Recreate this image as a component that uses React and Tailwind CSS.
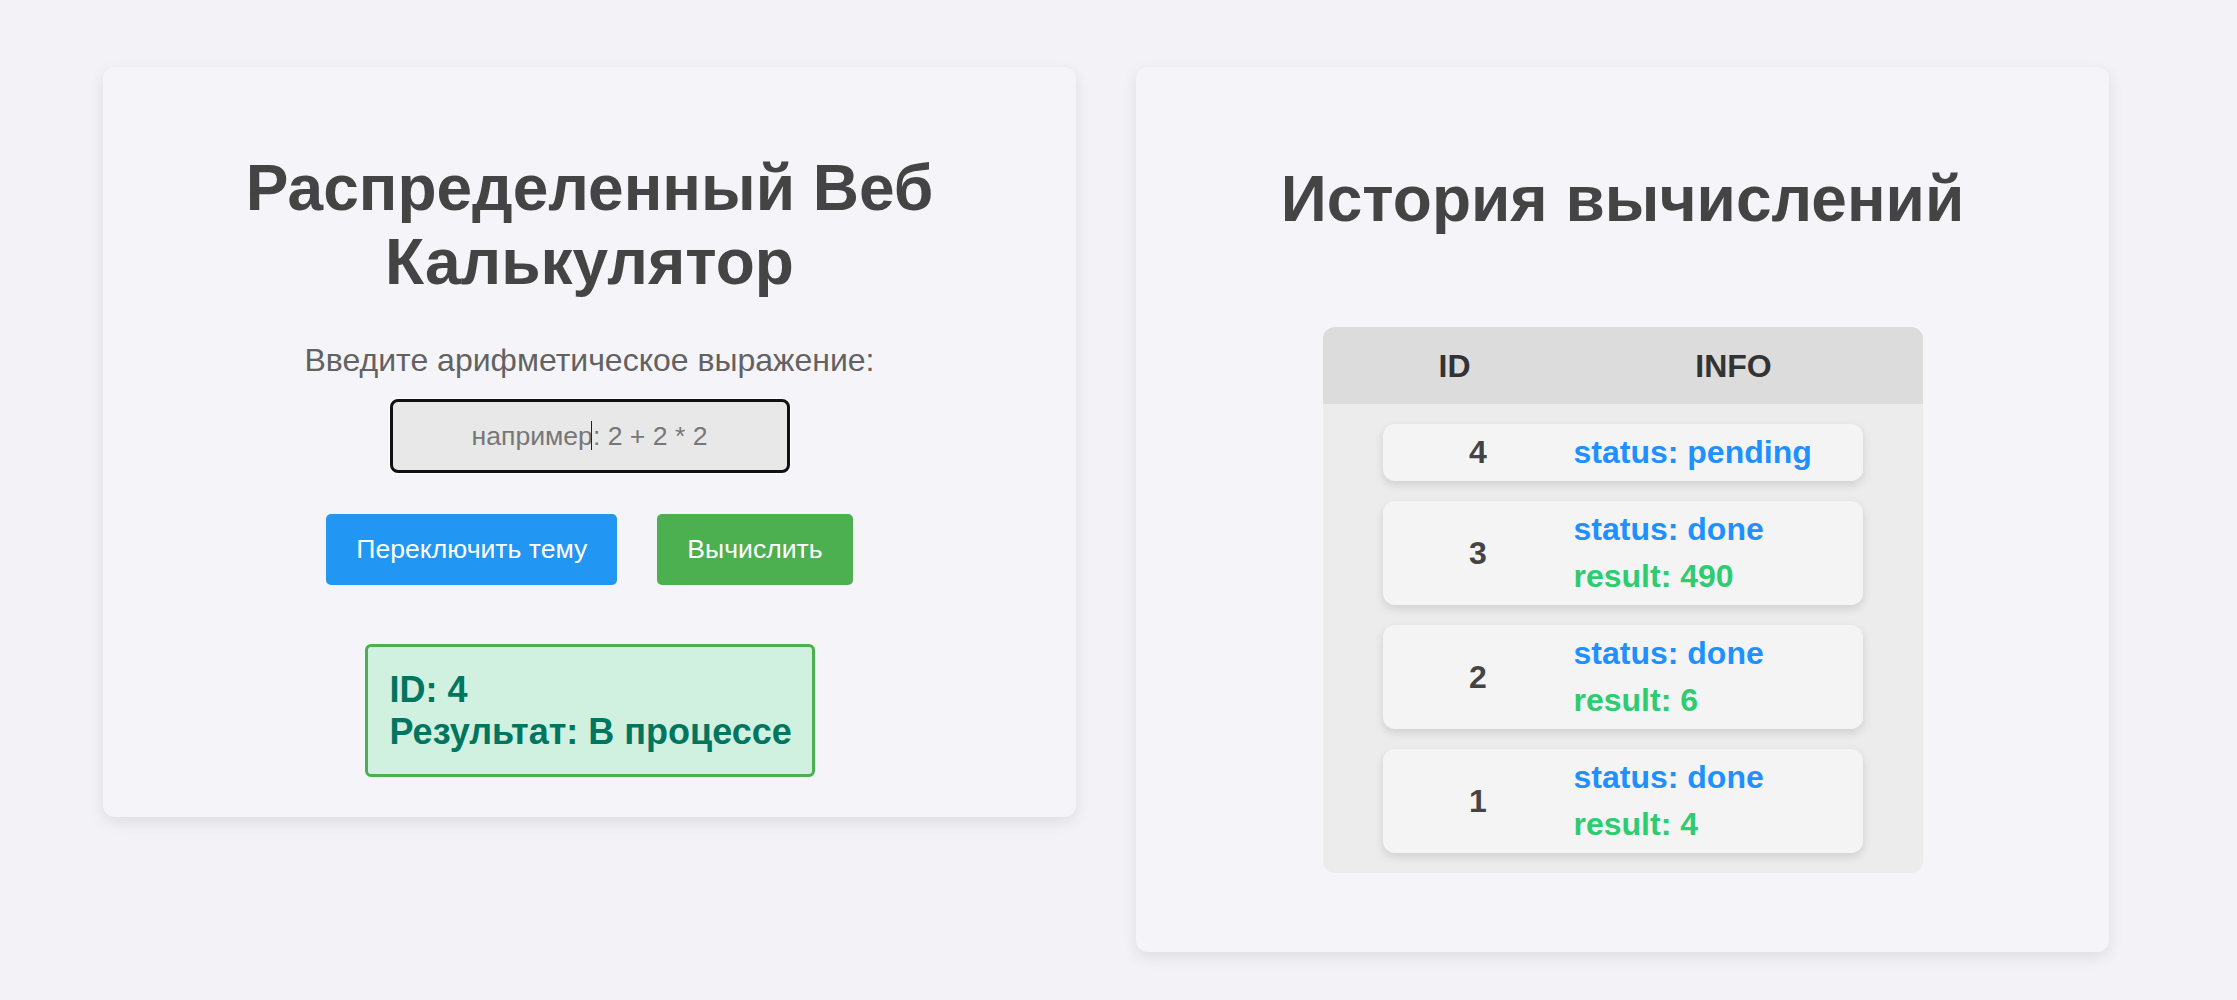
import React from 'react'

const history = [
  { id: 4, status: 'pending' },
  { id: 3, status: 'done', result: 490 },
  { id: 2, status: 'done', result: 6 },
  { id: 1, status: 'done', result: 4 },
]

const App = () => {
  return (
    <div className="min-h-screen bg-[#f3f3f7] font-['Liberation_Sans',Arial,sans-serif]">
      <div className="flex items-start gap-[60px] pl-[103px] pt-[67px]">
        {/* calculator */}
        <div className="flex w-[973px] flex-col items-center rounded-xl bg-[#f5f5f9] pt-[84px] pb-[40px] shadow-[0_5px_16px_rgba(0,0,0,0.09)]">
          <h1 className="text-center text-[64px] leading-[normal] font-bold text-[#444]">
            Распределенный Веб
            <br />
            Калькулятор
          </h1>
          <p className="mt-[43px] text-[32px] leading-[normal] text-[#626262]">
            Введите арифметическое выражение:
          </p>
          <div className="relative mt-[20px]">
            <input
              className="h-[74px] w-[400px] rounded-lg border-[3px] border-[#111] bg-[#e8e8e8] text-center text-[26.6px] outline-none ring-1 ring-white placeholder:text-[#777]"
              type="text"
              placeholder="например: 2 + 2 * 2"
            />
            <span className="pointer-events-none absolute top-[22px] left-[201px] h-[29px] w-px bg-[#222]" />
          </div>
          <div className="mt-[41px] flex gap-[40px]">
            <button className="rounded-[5px] bg-[#2196f3] px-[30px] py-[20px] text-[26.6px] leading-[normal] text-white">
              Переключить тему
            </button>
            <button className="rounded-[5px] bg-[#4caf50] px-[30px] py-[20px] text-[26.6px] leading-[normal] text-white">
              Вычислить
            </button>
          </div>
          <div className="mt-[59px] w-[450px] whitespace-nowrap rounded-md border-[3px] border-[#4caf50] bg-[#d0f0e0] px-[22px] pt-[22px] pb-[21px] text-[36px] leading-[normal] font-bold text-[#00755f]">
            <div>ID: 4</div>
            <div>Результат: В процессе</div>
          </div>
        </div>

        {/* history */}
        <div className="flex w-[973px] flex-col items-center rounded-xl bg-[#f5f5f9] pt-[95px] pb-[79px] shadow-[0_5px_16px_rgba(0,0,0,0.09)]">
          <h2 className="text-center text-[64px] leading-[normal] font-bold text-[#444]">
            История вычислений
          </h2>
          <div className="mt-[91px] w-[600px] overflow-hidden rounded-xl bg-[#ececec]">
            <div className="flex h-[77px] items-center bg-[#dcdcdc] text-[32px] font-bold text-[#333]">
              <div className="w-[264px] text-center">ID</div>
              <div className="w-[294px] text-center">INFO</div>
            </div>
            <div className="flex flex-col gap-[20px] px-[60px] py-[20px]">
              {history.map((h) => (
                <div
                  key={h.id}
                  className="flex items-center rounded-xl bg-[#f4f4f4] py-[10px] text-[32px] leading-[normal] font-bold shadow-[0_4px_10px_rgba(0,0,0,0.12)]"
                >
                  <div className="w-[191px] text-center text-[#444]">{h.id}</div>
                  <div className="flex flex-col gap-[10px]">
                    <span className="text-[#1e90ff]">status: {h.status}</span>
                    {h.result !== undefined && (
                      <span className="text-[#2ecc71]">result: {h.result}</span>
                    )}
                  </div>
                </div>
              ))}
            </div>
          </div>
        </div>
      </div>
    </div>
  )
}

export default App
